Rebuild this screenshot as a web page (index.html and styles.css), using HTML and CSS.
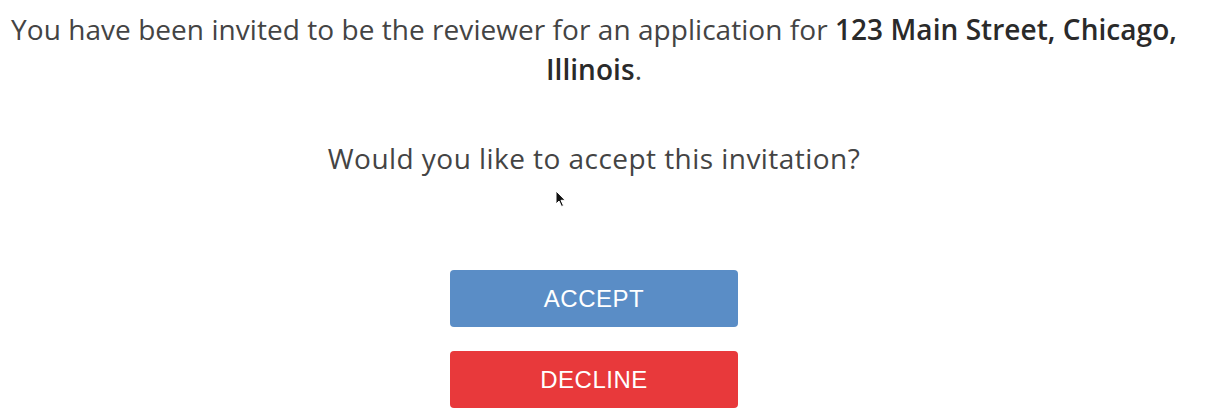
FILE: index.html
```html
<!DOCTYPE html>
<html lang="en">
<head>
    <meta charset="UTF-8">
    <meta name="viewport" content="width=device-width, initial-scale=1.0">
    <title>Reviewer Invitation</title>
    <link rel="stylesheet" href="styles.css">
</head>
<body>
    <main class="invite">
        <p class="invite-text">You have been invited to be the reviewer for an application for <strong>123 Main Street, Chicago, Illinois</strong>.</p>
        <p class="invite-question">Would you like to accept this invitation?</p>
        <div class="actions">
            <button type="button" class="btn btn-accept">ACCEPT</button>
            <button type="button" class="btn btn-decline">DECLINE</button>
        </div>
    </main>
    <svg class="cursor" width="12" height="18" viewBox="0 0 12 18" aria-hidden="true">
        <path d="M1 1 L1 14 L4 11 L6.5 16.5 L8.5 15.6 L6 10.3 L10.2 10.3 Z" fill="#111" stroke="#fff" stroke-width="1"/>
    </svg>
</body>
</html>
```

FILE: styles.css
```css
body {
    font-family: 'Open Sans', 'Liberation Sans', sans-serif;
    margin: 0;
    padding: 0;
    background-color: #fff;
    color: #444;
}

.invite {
    width: 1188px;
    padding-top: 9px;
    text-align: center;
}

.invite-text {
    margin: 0;
    font-size: 28px;
    letter-spacing: 0.05px;
    line-height: 40px;
}

.invite-text strong {
    font-weight: 600;
    color: #2a2a2a;
}

.invite-question {
    margin: 49px 0 0;
    font-size: 28px;
    letter-spacing: 0.45px;
    line-height: 40px;
}

.actions {
    display: flex;
    flex-direction: column;
    align-items: center;
    gap: 24px;
    margin-top: 92px;
}

.btn {
    width: 288px;
    height: 57px;
    border: none;
    border-radius: 4px;
    color: white;
    font-family: 'Liberation Sans', Arial, sans-serif;
    font-size: 24px;
    letter-spacing: 0.5px;
    cursor: pointer;
}

.btn-accept {
    background-color: #5a8dc6;
}

.btn-decline {
    background-color: #e8393b;
}

.cursor {
    position: absolute;
    left: 555px;
    top: 190px;
}
```
